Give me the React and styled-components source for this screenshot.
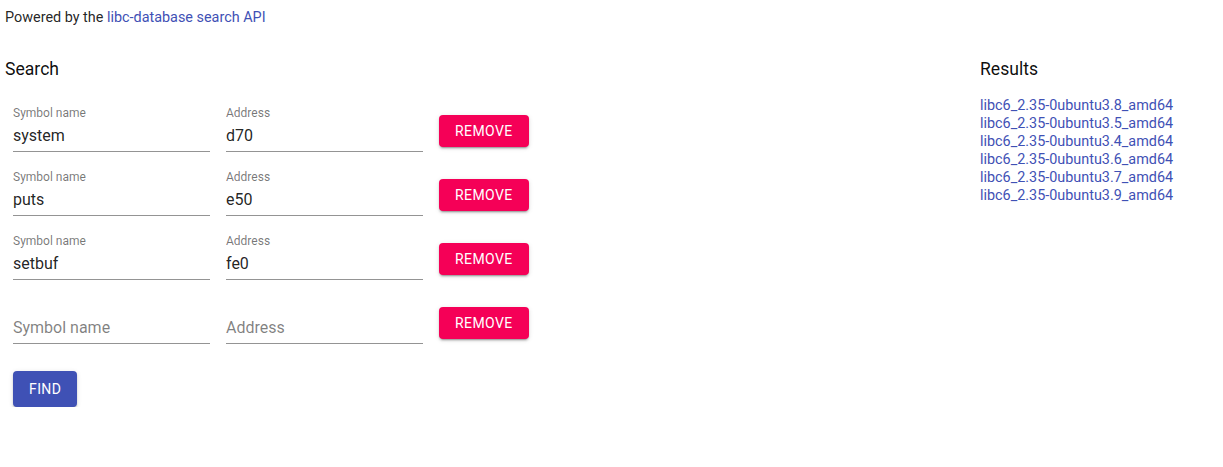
import React, { useState } from "react";
import styled, { createGlobalStyle } from "styled-components";

const GlobalStyle = createGlobalStyle`
  body {
    margin: 0;
    font-family: Roboto, "Helvetica Neue", Arial, sans-serif;
    color: rgba(0, 0, 0, 0.87);
    background: #fff;
  }
`;

const initialRows = [
  { symbol: "system", address: "d70" },
  { symbol: "puts", address: "e50" },
  { symbol: "setbuf", address: "fe0" },
  { symbol: "", address: "" },
];

const results = [
  "libc6_2.35-0ubuntu3.8_amd64",
  "libc6_2.35-0ubuntu3.5_amd64",
  "libc6_2.35-0ubuntu3.4_amd64",
  "libc6_2.35-0ubuntu3.6_amd64",
  "libc6_2.35-0ubuntu3.7_amd64",
  "libc6_2.35-0ubuntu3.9_amd64",
];

const Field = ({ label, value }) => (
  <FieldBox>
    <FieldLabel>{value ? label : ""}</FieldLabel>
    <FieldInput $empty={!value}>{value || label}</FieldInput>
  </FieldBox>
);

const App = () => {
  const [rows, setRows] = useState(initialRows);

  return (
    <Page>
      <GlobalStyle />
      <Credit>
        Powered by the <Link href="#">libc-database search API</Link>
      </Credit>
      <Columns>
        <section>
          <Heading>Search</Heading>
          <Form>
            {rows.map((row, i) => (
              <Row key={i}>
                <Field label="Symbol name" value={row.symbol} />
                <Field label="Address" value={row.address} />
                <Button
                  $color="#f50057"
                  $top="10px"
                  onClick={() => setRows(rows.filter((_, j) => j !== i))}
                >
                  Remove
                </Button>
              </Row>
            ))}
            <FindButton $color="#3f51b5">Find</FindButton>
          </Form>
        </section>
        <section>
          <Heading>Results</Heading>
          <ResultList>
            {results.map((r) => (
              <li key={r}>
                <Link href="#">{r}</Link>
              </li>
            ))}
          </ResultList>
        </section>
      </Columns>
    </Page>
  );
};

export default App;

// Styled Components
const Page = styled.div`
  padding: 0 5px;
`;

const Credit = styled.div`
  font-size: 14.4px;
  line-height: 20px;
  padding-top: 8px;
`;

const Link = styled.a`
  color: #3f51b5;
  text-decoration: none;
`;

const Columns = styled.div`
  display: grid;
  grid-template-columns: 1fr 238px;
  margin-top: 28px;
`;

const Heading = styled.h2`
  margin: 0;
  font-size: 17.6px;
  font-weight: 400;
  line-height: 24px;
  padding-top: 1px;
  color: rgba(0, 0, 0, 0.95);
`;

const Form = styled.div`
  display: flex;
  flex-direction: column;
  align-items: flex-start;
  padding-left: 8px;
  margin-top: 24px;
  gap: 17px;
`;

const Row = styled.div`
  display: flex;
  align-items: flex-start;
  gap: 16px;
`;

const FieldBox = styled.div`
  display: flex;
  flex-direction: column;
  width: 197px;
`;

const FieldLabel = styled.div`
  font-size: 12px;
  line-height: 16px;
  height: 16px;
  color: rgba(0, 0, 0, 0.54);
`;

const FieldInput = styled.div`
  font-size: 16px;
  line-height: 20px;
  padding: 5px 0;
  border-bottom: 1px solid rgba(0, 0, 0, 0.42);
  color: ${(p) => (p.$empty ? "rgba(0, 0, 0, 0.5)" : "rgba(0, 0, 0, 0.87)")};
`;

const Button = styled.button`
  margin-top: ${(p) => p.$top || "0"};
  height: 32px;
  padding: 0 16px;
  border: none;
  border-radius: 4px;
  background: ${(p) => p.$color};
  color: #fff;
  font-family: Roboto, sans-serif;
  font-size: 14px;
  font-weight: 400;
  letter-spacing: 0.02857em;
  text-transform: uppercase;
  box-shadow: 0 3px 1px -2px rgba(0, 0, 0, 0.2), 0 2px 2px 0 rgba(0, 0, 0, 0.14),
    0 1px 5px 0 rgba(0, 0, 0, 0.12);
  cursor: pointer;
`;

const FindButton = styled(Button)`
  height: 36px;
  margin-top: 10px;
`;

const ResultList = styled.ul`
  list-style: none;
  margin: 16px 0 0;
  padding: 0;
  font-size: 14.4px;
  line-height: 18px;
`;
